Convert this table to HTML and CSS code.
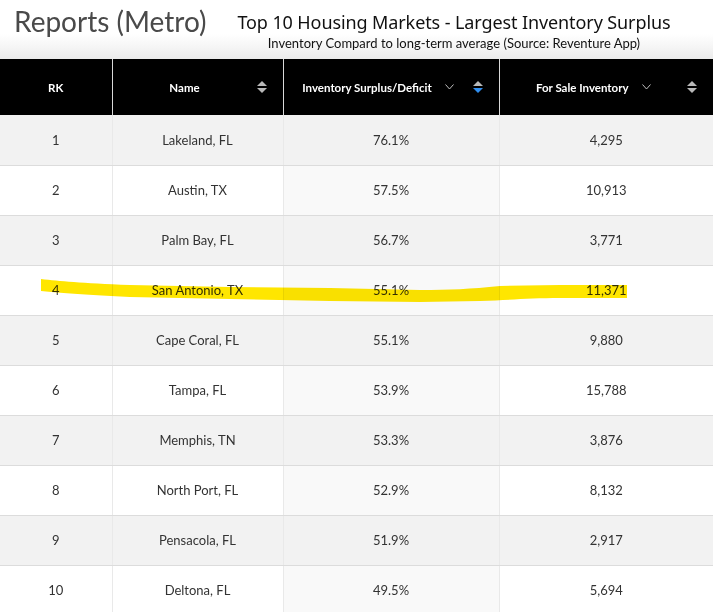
FILE: index.html
```html
<!DOCTYPE html>
<html>
<head>
<meta charset="utf-8">
<link rel="stylesheet" href="styles.css">
</head>
<body>
<div class="page">
  <header class="top">
    <h1 class="report-title">Reports (Metro)</h1>
    <div class="titles">
      <div class="main-title">Top 10 Housing Markets - Largest Inventory Surplus</div>
      <div class="sub-title">Inventory Compard to long-term average (Source: Reventure App)</div>
    </div>
  </header>
  <table class="grid">
    <colgroup>
      <col class="c1"><col class="c2"><col class="c3"><col class="c4">
    </colgroup>
    <thead>
      <tr>
        <th><div class="hcell plain"><span class="hlabel">RK</span></div></th>
        <th><div class="hcell"><span class="hlabel">Name</span><span class="sort"><i class="up"></i><i class="down"></i></span></div></th>
        <th><div class="hcell"><span class="hlabel">Inventory Surplus/Deficit<svg class="chev" width="9" height="6" viewBox="0 0 9 6"><path d="M0.5 0.5 L4.5 5 L8.5 0.5" fill="none" stroke="#bdbdbd" stroke-width="1"/></svg></span><span class="sort"><i class="up"></i><i class="down active"></i></span></div></th>
        <th><div class="hcell"><span class="hlabel">For Sale Inventory<svg class="chev" width="9" height="6" viewBox="0 0 9 6"><path d="M0.5 0.5 L4.5 5 L8.5 0.5" fill="none" stroke="#bdbdbd" stroke-width="1"/></svg></span><span class="sort"><i class="up"></i><i class="down"></i></span></div></th>
      </tr>
    </thead>
    <tbody>
      <tr><td>1</td><td class="name">Lakeland, FL</td><td class="pct">76.1%</td><td>4,295</td></tr>
      <tr><td>2</td><td class="name">Austin, TX</td><td class="pct">57.5%</td><td>10,913</td></tr>
      <tr><td>3</td><td class="name">Palm Bay, FL</td><td class="pct">56.7%</td><td>3,771</td></tr>
      <tr><td>4</td><td class="name">San Antonio, TX</td><td class="pct">55.1%</td><td>11,371</td></tr>
      <tr><td>5</td><td class="name">Cape Coral, FL</td><td class="pct">55.1%</td><td>9,880</td></tr>
      <tr><td>6</td><td class="name">Tampa, FL</td><td class="pct">53.9%</td><td>15,788</td></tr>
      <tr><td>7</td><td class="name">Memphis, TN</td><td class="pct">53.3%</td><td>3,876</td></tr>
      <tr><td>8</td><td class="name">North Port, FL</td><td class="pct">52.9%</td><td>8,132</td></tr>
      <tr><td>9</td><td class="name">Pensacola, FL</td><td class="pct">51.9%</td><td>2,917</td></tr>
      <tr><td>10</td><td class="name">Deltona, FL</td><td class="pct">49.5%</td><td>5,694</td></tr>
    </tbody>
  </table>
  <svg class="marker" width="713" height="612" viewBox="0 0 713 612">
    <path d="M41 279 C60 281 80 283 130 285 L230 287 L330 288 L420 290 C450 290 470 289 500 286 L560 285 L627 285 L627 298 L560 298 C530 298 510 300 480 301 L420 302 L330 301 L230 299 L130 297 C90 295 60 293 41 291 Z" fill="#ffe600"/>
  </svg>
</div>
</body>
</html>
```
FILE: styles.css
```css
* { box-sizing: border-box; }
html, body { margin: 0; padding: 0; background: #fff; }
.page {
  position: relative;
  width: 713px;
  height: 612px;
  overflow: hidden;
}
.top {
  height: 59px;
  display: flex;
  align-items: flex-start;
  background: linear-gradient(to bottom, #fff 0px, #fff 34px, #f6f6f6 46px, #ececec 58px);
}
.report-title {
  margin: 3px 0 0 14px;
  font-family: Lato, "Liberation Sans", sans-serif;
  font-weight: 400;
  font-size: 28px;
  line-height: 36px;
  color: #4a4a4a;
}
.titles {
  margin-left: 31px;
  padding-top: 9px;
  display: flex;
  flex-direction: column;
  align-items: center;
}
.main-title {
  font-family: "Noto Sans", sans-serif;
  font-size: 18px;
  line-height: 26px;
  color: #111;
  letter-spacing: -0.1px;
}
.sub-title {
  font-family: Lato, sans-serif;
  font-size: 13px;
  line-height: 16px;
  color: #111;
}
.grid {
  width: 713px;
  table-layout: fixed;
  border-collapse: collapse;
  font-family: Lato, "Liberation Sans", sans-serif;
}
.c1 { width: 112px; }
.c2 { width: 171px; }
.c3 { width: 216px; }
.c4 { width: 214px; }
thead th {
  background: #000;
  color: #fff;
  height: 56px;
  padding: 0;
  font-size: 11.5px;
  font-weight: 700;
  border-left: 1px solid #d9d9d9;
}
thead th:first-child { border-left: none; }
.hcell {
  display: flex;
  align-items: center;
  height: 56px;
  padding-right: 16px;
}
.hcell.plain { padding-right: 0; }
.hlabel {
  flex: 1;
  display: flex;
  justify-content: center;
  align-items: center;
  gap: 13px;
}
.sort {
  display: flex;
  flex-direction: column;
  gap: 2px;
}
.sort i {
  display: block;
  width: 0;
  height: 0;
  border-left: 5px solid transparent;
  border-right: 5px solid transparent;
}
.sort .up { border-bottom: 5px solid #b8b8b8; }
.sort .down { border-top: 5px solid #b8b8b8; }
.sort .down.active { border-top-color: #2f8ef0; }
.chev { display: block; }
tbody td {
  height: 50px;
  padding: 0;
  text-align: center;
  font-size: 13px;
  color: #333;
  border-bottom: 1px solid #dcdcdc;
  border-left: 1px solid #e9e9e9;
}
tbody td:first-child { border-left: none; }
tbody tr:nth-child(odd) td { background: #f2f2f2; }
tbody tr:nth-child(even) td { background: #fff; }
tbody tr:nth-child(even) td.pct { background: #f9f9f9; }
.marker {
  position: absolute;
  left: 0;
  top: 0;
  pointer-events: none;
  mix-blend-mode: multiply;
}
```
